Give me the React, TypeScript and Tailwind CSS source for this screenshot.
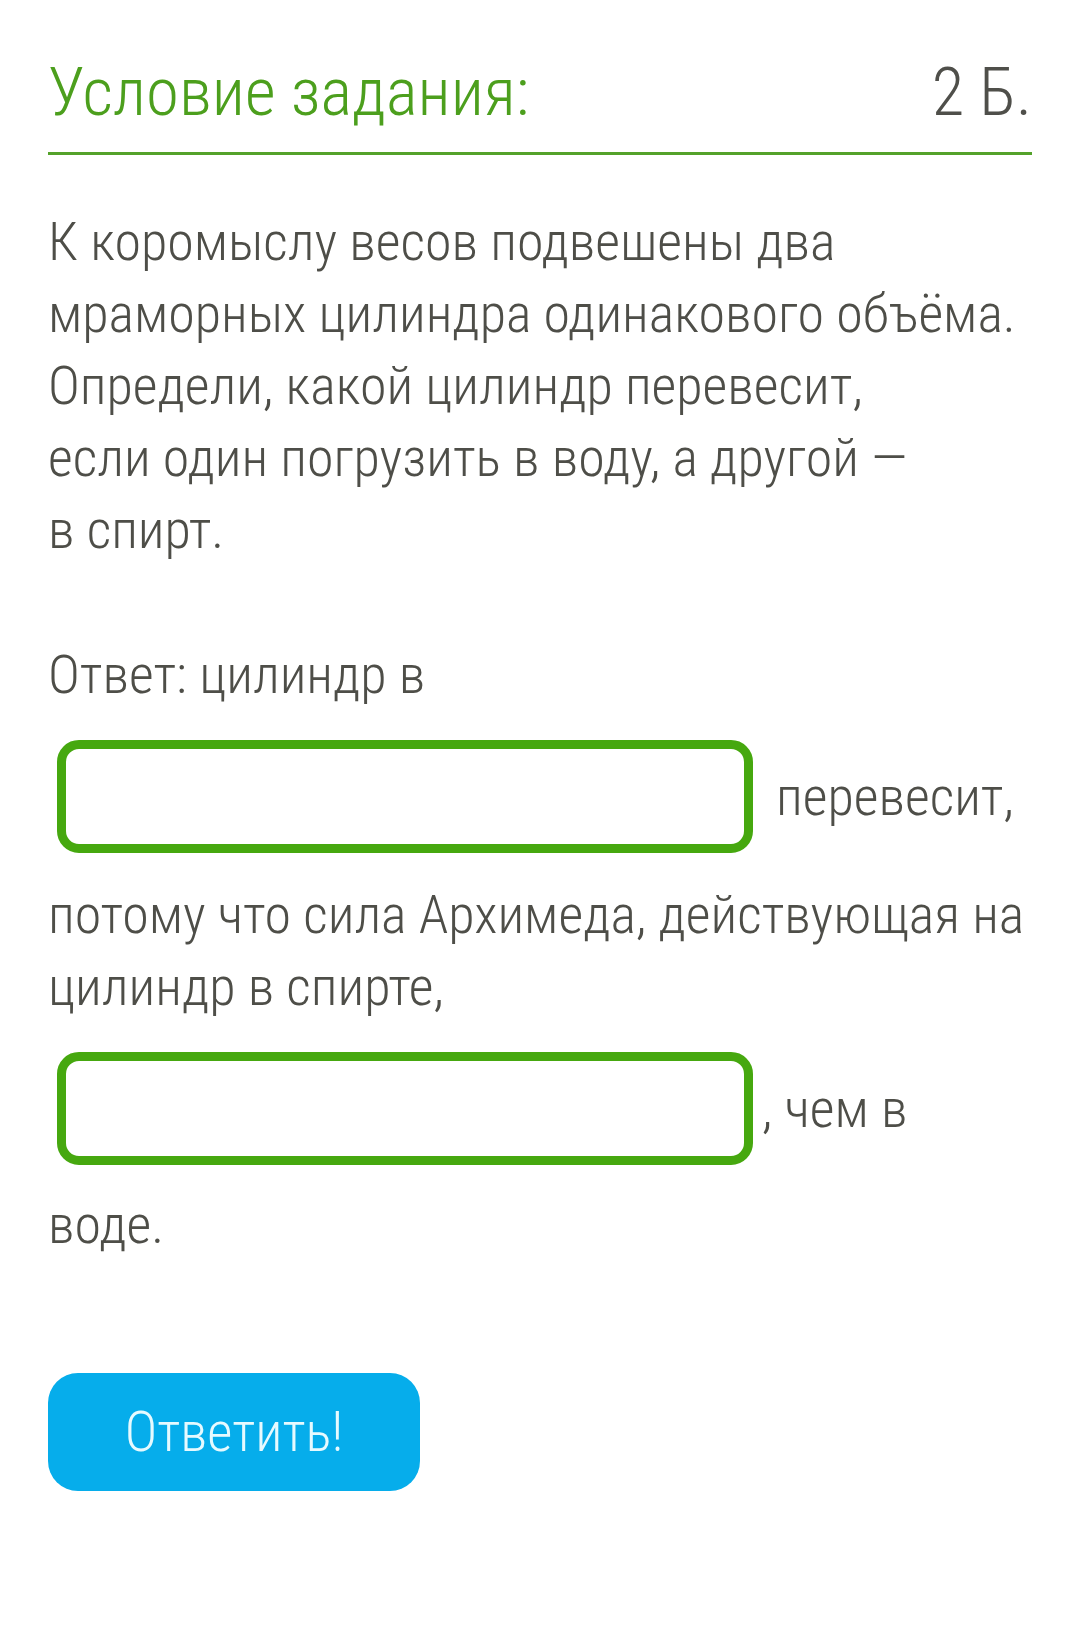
import React from "react";

const font = { fontFamily: '"Roboto Condensed Light", "Roboto Condensed", Roboto, "Noto Sans", sans-serif' };

function Box() {
  return <div className="ml-[9px] w-[696px] h-[113px] shrink-0 rounded-[22px] border-[9px] border-[#46a80f] bg-white" />;
}

export default function App() {
  return (
    <div className="w-[1080px] min-h-[1644px] bg-white px-[48px] font-light font-stretch-condensed" style={font}>
      <div className="flex items-baseline justify-between pt-[52px] pb-[20px] border-b-[3px] border-[#54a22a]">
        <h1 className="text-[67px] leading-[80px] text-[#4c9f1d] font-light">Условие задания:</h1>
        <span className="text-[67px] leading-[80px] text-[#4f4f4a] font-light">2 Б.</span>
      </div>
      <div className="mt-[51px] text-[54px] leading-[72px] text-[#4e4e48]">
        <p>
          К коромыслу весов подвешены два
          <br />
          мраморных цилиндра одинакового объёма.
          <br />
          Определи, какой цилиндр перевесит,
          <br />
          если один погрузить в воду, а другой —
          <br />в спирт.
        </p>
        <p className="mt-[73px]">Ответ: цилиндр в</p>
        <div className="flex items-center mt-[29px] mb-[26px]">
          <Box />
          <span className="ml-[23px]">перевесит,</span>
        </div>
        <p>
          потому что сила Архимеда, действующая на
          <br />
          цилиндр в спирте,
        </p>
        <div className="flex items-center mt-[29px] mb-[24px]">
          <Box />
          <span className="ml-[9px]">, чем в</span>
        </div>
        <p>воде.</p>
      </div>
      <button
        className="mt-[112px] w-[372px] h-[118px] rounded-[30px] bg-[#06adeb] text-[55px] font-light text-[#e6faff] leading-none"
        style={font}
      >
        Ответить!
      </button>
    </div>
  );
}
